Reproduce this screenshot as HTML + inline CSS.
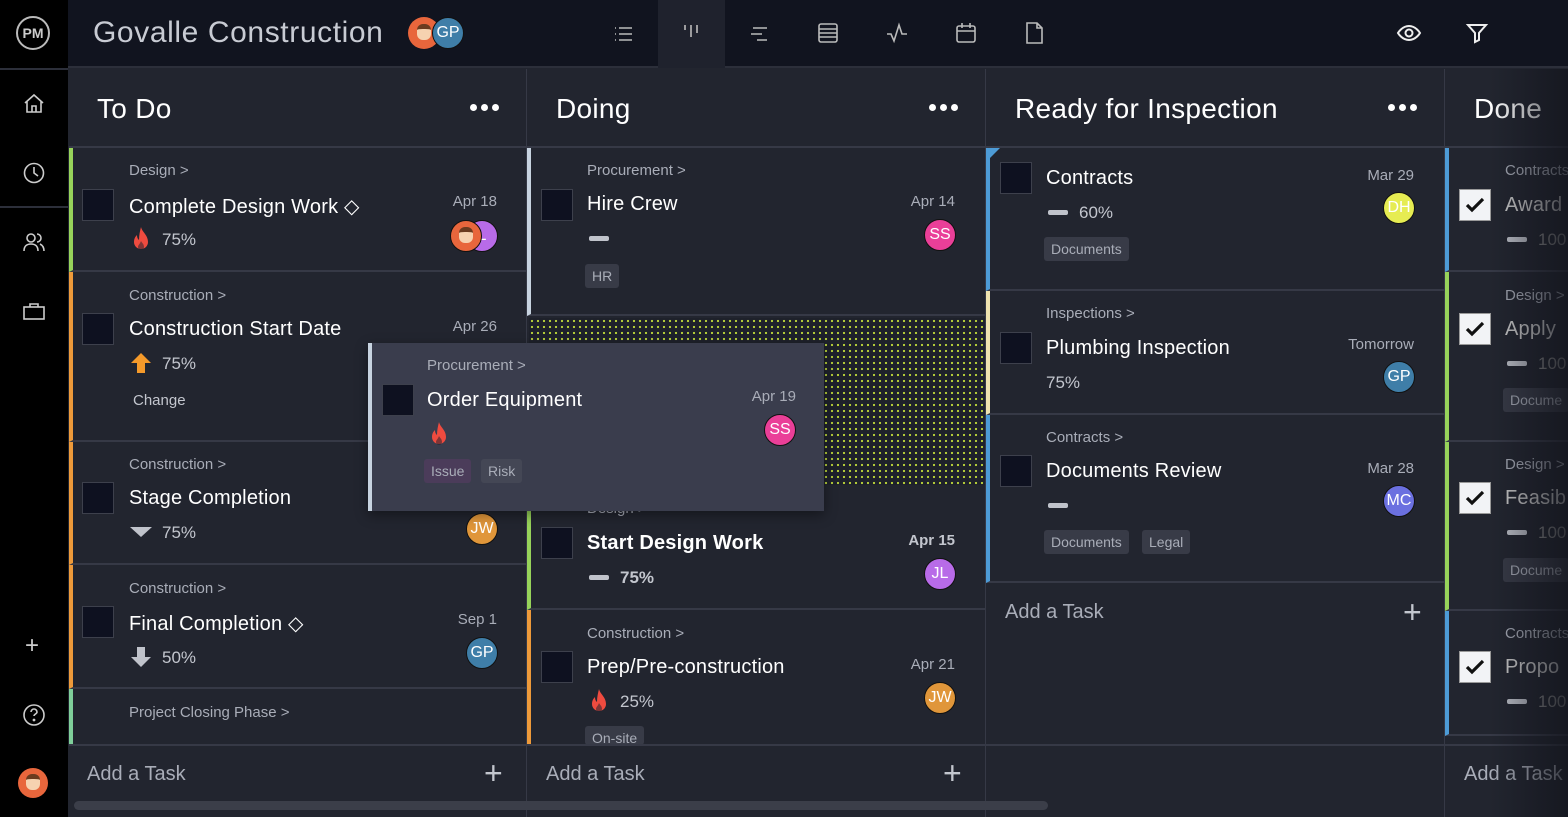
<!DOCTYPE html>
<html><head><meta charset="utf-8"><style>
*{margin:0;padding:0;box-sizing:border-box}
body{width:1568px;height:817px;overflow:hidden;background:#22252f;font-family:"Liberation Sans",sans-serif;position:relative;color:#fff}
.a{position:absolute}
.side{left:0;top:0;width:68px;height:817px;background:#000}
.top{left:68px;top:0;width:1500px;height:68px;background:#11141f;border-bottom:2px solid #2c2f3a}
.col{top:69px;height:748px;background:#22252f;border-right:1px solid #363946}
.hdr{font-size:28px;color:#fff;top:93px;letter-spacing:.3px}
.dots{display:flex;gap:4px}
.dots i{width:7px;height:7px;border-radius:50%;background:#fff;display:block}
.card{background:#22252f;border-bottom:2px solid #363946;border-left:4px solid #888}
.cat{font-size:15px;color:#a9adb8}
.tt{font-size:20px;color:#fff;letter-spacing:.2px}
.dt{font-size:15px;color:#a9adb8;text-align:right}
.pc{font-size:17px;color:#c3c6ce}
.cb{width:32px;height:32px;background:#0e1120;border:1.5px solid #3d404c}
.av{width:32px;height:32px;border-radius:50%;font-size:16px;text-align:center;line-height:30px;color:#fff;border:1.5px solid #111}
.tag{font-size:14px;color:#a9adb8;background:#383b47;border-radius:3px;padding:4px 7px}
.dash{width:20px;height:5px;background:#c0c3cb;border-radius:2px}
.add{font-size:20px;color:#a9adb8}
.plus{font-size:32px;color:#c3c6ce;font-weight:300}
.ck{width:32px;height:32px;background:#f2f3f6;border:1.5px solid #999}
</style></head><body>
<svg width="0" height="0" style="position:absolute"><defs><symbol id="fl" viewBox="0 0 20 24"><path d="M10 0c1 5 7 8 7 15a7 7 0 01-14 0c0-3 1-5 3-7 0 3 1 4 2 5 0-5 1-9 2-13z" fill="#ef4b3f"/><path d="M10 14c1 2 3 3 3 6a3 3 0 01-6 0c0-2 2-3 3-6z" fill="#22252f" opacity=".55"/></symbol>
<symbol id="ck" viewBox="0 0 24 24"><path d="M4 12l5 5 11-11" fill="none" stroke="#111" stroke-width="3.2"/></symbol></defs></svg>
<div class="a side"></div>
<div class="a" style="left:0;top:68px;width:68px;height:2px;background:#2c2f3a"></div>
<div class="a" style="left:0;top:206px;width:68px;height:2px;background:#2c2f3a"></div>
<div class="a" style="left:16px;top:16px;width:34px;height:34px;border:2px solid #bbb;border-radius:50%;font-size:14px;font-weight:bold;color:#ccc;text-align:center;line-height:30px">PM</div>
<svg class="a" style="left:22px;top:92px" width="24" height="24" viewBox="0 0 24 24" fill="none" stroke="#ccc" stroke-width="1.6"><path d="M3 11L12 3l9 8M5 9v11h14V9M10 20v-6h4v6"/></svg>
<svg class="a" style="left:22px;top:161px" width="24" height="24" viewBox="0 0 24 24" fill="none" stroke="#ccc" stroke-width="1.6"><circle cx="12" cy="12" r="9.5"/><path d="M12 6v6l4 3"/></svg>
<svg class="a" style="left:22px;top:230px" width="24" height="24" viewBox="0 0 24 24" fill="none" stroke="#ccc" stroke-width="1.6"><circle cx="9" cy="8" r="4"/><path d="M2 21c0-5 3-7 7-7s7 2 7 7M15 4a4 4 0 010 8M18 14c2 1 4 3 4 7"/></svg>
<svg class="a" style="left:22px;top:300px" width="24" height="24" viewBox="0 0 24 24" fill="none" stroke="#ccc" stroke-width="1.6"><rect x="2" y="7" width="20" height="12"/><path d="M8 7V4h8v3"/></svg>
<div class="a" style="left:25px;top:632px;font-size:24px;color:#ccc">+</div>
<svg class="a" style="left:22px;top:703px" width="24" height="24" viewBox="0 0 24 24" fill="none" stroke="#ccc" stroke-width="1.6"><circle cx="12" cy="12" r="10"/><path d="M9 9a3 3 0 116 0c0 2-3 2-3 4"/><circle cx="12" cy="17" r=".6" fill="#ccc"/></svg>
<div class="a" style="left:18px;top:768px;width:30px;height:30px;border-radius:50%;background:#e8663c"><div class="a" style="left:8px;top:6px;width:14px;height:16px;border-radius:6px;background:#f6d2b0;border-top:5px solid #6b3b1f"></div></div>

<div class="a top"></div>
<div class="a" style="left:93px;top:16px;font-size:30px;color:#c8cbd3;letter-spacing:.6px">Govalle Construction</div>
<div class="a" style="left:408px;top:17px;width:32px;height:32px;border-radius:50%;background:#e8663c"><div class="a" style="left:9px;top:7px;width:14px;height:16px;border-radius:6px;background:#f6d2b0;border-top:5px solid #6b3b1f"></div></div>
<div class="a av" style="left:432px;top:17px;background:#3f7ea8">GP</div>
<div class="a" style="left:658px;top:0;width:67px;height:68px;background:#1f222d"></div>
<svg class="a" style="left:611px;top:22px" width="24" height="24" viewBox="0 0 24 24" stroke="#bbb" stroke-width="1.6"><path d="M4 6h1M4 12h1M4 18h1M8 6h13M8 12h13M8 18h13"/></svg>
<svg class="a" style="left:679px;top:20px" width="24" height="24" viewBox="0 0 24 24" stroke="#bbb" stroke-width="1.6"><path d="M6 5v5M12 5v12M18 5v8"/></svg>
<svg class="a" style="left:747px;top:22px" width="24" height="24" viewBox="0 0 24 24" stroke="#bbb" stroke-width="1.6"><path d="M6 6h14M4 12h11M10 18h10"/></svg>
<svg class="a" style="left:816px;top:21px" width="24" height="24" viewBox="0 0 24 24" fill="none" stroke="#bbb" stroke-width="1.6"><rect x="3" y="3" width="18" height="18" rx="2"/><path d="M3 8h18M3 12h18M3 16h18"/></svg>
<svg class="a" style="left:885px;top:21px" width="24" height="24" viewBox="0 0 24 24" fill="none" stroke="#bbb" stroke-width="1.6"><path d="M2 13h4l3 7 5-16 3 9h5"/></svg>
<svg class="a" style="left:954px;top:21px" width="24" height="24" viewBox="0 0 24 24" fill="none" stroke="#bbb" stroke-width="1.6"><rect x="3" y="5" width="18" height="16" rx="2"/><path d="M3 10h18M8 2v5M16 2v5"/></svg>
<svg class="a" style="left:1022px;top:21px" width="24" height="24" viewBox="0 0 24 24" fill="none" stroke="#bbb" stroke-width="1.6"><path d="M5 2h10l5 5v15H5zM15 2v5h5"/></svg>
<svg class="a" style="left:1396px;top:21px" width="26" height="24" viewBox="0 0 26 24" fill="none" stroke="#eee" stroke-width="2"><path d="M2 12s4-7 11-7 11 7 11 7-4 7-11 7S2 12 2 12z"/><circle cx="13" cy="12" r="3.5"/></svg>
<svg class="a" style="left:1465px;top:21px" width="24" height="24" viewBox="0 0 24 24" fill="none" stroke="#eee" stroke-width="2"><path d="M3 4h18l-7 8v7l-4 2v-9z"/></svg>

<div class="a col" style="left:69px;width:458px"></div>
<div class="a col" style="left:527px;width:459px"></div>
<div class="a col" style="left:986px;width:459px"></div>
<div class="a col" style="left:1445px;width:123px;border:0"></div>
<div class="a" style="left:69px;top:146px;width:1499px;height:2px;background:#363946"></div>
<div class="a hdr" style="left:97px">To Do</div><div class="a dots" style="left:470px;top:104px"><i></i><i></i><i></i></div>
<div class="a hdr" style="left:556px">Doing</div><div class="a dots" style="left:929px;top:104px"><i></i><i></i><i></i></div>
<div class="a hdr" style="left:1015px">Ready for Inspection</div><div class="a dots" style="left:1388px;top:104px"><i></i><i></i><i></i></div>
<div class="a hdr" style="left:1474px">Done</div>

<!-- To Do -->
<div class="a card" style="left:69px;top:148px;width:457px;height:124px;border-left-color:#97d35a"></div>
<div class="a cat" style="left:129px;top:162px">Design &gt;</div>
<div class="a cb" style="left:82px;top:189px"></div>
<div class="a tt" style="left:129px;top:194px">Complete Design Work ◇</div>
<div class="a dt" style="left:440px;top:193px;width:57px">Apr 18</div>
<svg class="a" style="left:131px;top:227px" width="20" height="24"><use href="#fl"/></svg>
<div class="a pc" style="left:162px;top:230px">75%</div>
<div class="a av" style="left:466px;top:220px;background:#b86be8">L</div>
<div class="a" style="left:450px;top:220px;width:32px;height:32px;border-radius:50%;background:#e8663c;border:1.5px solid #111"><div class="a" style="left:8px;top:6px;width:14px;height:16px;border-radius:6px;background:#f6d2b0;border-top:5px solid #6b3b1f"></div></div>

<div class="a card" style="left:69px;top:272px;width:457px;height:170px;border-left-color:#ee9a3a"></div>
<div class="a cat" style="left:129px;top:287px">Construction &gt;</div>
<div class="a cb" style="left:82px;top:313px"></div>
<div class="a tt" style="left:129px;top:318px">Construction Start Date</div>
<div class="a dt" style="left:440px;top:318px;width:57px">Apr 26</div>
<svg class="a" style="left:130px;top:352px" width="22" height="22" viewBox="0 0 22 22"><path d="M11 1L21 11h-6v10H7V11H1z" fill="#f59a2a"/></svg>
<div class="a pc" style="left:162px;top:354px">75%</div>
<div class="a cat" style="left:133px;top:392px;color:#c3c6ce">Change</div>

<div class="a card" style="left:69px;top:442px;width:457px;height:123px;border-left-color:#ee9a3a"></div>
<div class="a cat" style="left:129px;top:456px">Construction &gt;</div>
<div class="a cb" style="left:82px;top:482px"></div>
<div class="a tt" style="left:129px;top:487px">Stage Completion</div>
<div class="a" style="left:130px;top:527px;border-left:11px solid transparent;border-right:11px solid transparent;border-top:10px solid #c0c3cb"></div>
<div class="a pc" style="left:162px;top:523px">75%</div>
<div class="a av" style="left:466px;top:513px;background:#e0963a">JW</div>

<div class="a card" style="left:69px;top:565px;width:457px;height:124px;border-left-color:#ee9a3a"></div>
<div class="a cat" style="left:129px;top:580px">Construction &gt;</div>
<div class="a cb" style="left:82px;top:606px"></div>
<div class="a tt" style="left:129px;top:611px">Final Completion ◇</div>
<div class="a dt" style="left:440px;top:611px;width:57px">Sep 1</div>
<svg class="a" style="left:130px;top:646px" width="22" height="22" viewBox="0 0 22 22"><path d="M11 21L21 11h-6V1H7v10H1z" fill="#c0c3cb"/></svg>
<div class="a pc" style="left:162px;top:648px">50%</div>
<div class="a av" style="left:466px;top:637px;background:#3f7ea8">GP</div>

<div class="a card" style="left:69px;top:689px;width:457px;height:56px;border-left-color:#7fcf9a;border-bottom:0"></div>
<div class="a cat" style="left:129px;top:704px">Project Closing Phase &gt;</div>

<!-- Doing -->
<div class="a card" style="left:527px;top:148px;width:458px;height:168px;border-left-color:#c7d3e0"></div>
<div class="a cat" style="left:587px;top:162px">Procurement &gt;</div>
<div class="a cb" style="left:541px;top:189px"></div>
<div class="a tt" style="left:587px;top:193px">Hire Crew</div>
<div class="a dt" style="left:898px;top:193px;width:57px">Apr 14</div>
<div class="a dash" style="left:589px;top:236px"></div>
<div class="a av" style="left:924px;top:219px;background:#ea3f98">SS</div>
<div class="a tag" style="left:585px;top:264px">HR</div>
<div class="a" style="left:529px;top:318px;width:456px;height:167px;background-color:#1e212b;background-image:radial-gradient(#b9d23a 1px,transparent 1.3px);background-size:6px 6px"></div>

<div class="a card" style="left:527px;top:486px;width:458px;height:124px;border-left-color:#97d35a"></div>
<div class="a cat" style="left:587px;top:500px">Design &gt;</div>
<div class="a cb" style="left:541px;top:527px"></div>
<div class="a tt" style="left:587px;top:532px;font-weight:bold">Start Design Work</div>
<div class="a dt" style="left:898px;top:532px;width:57px;font-weight:bold;color:#c3c6ce">Apr 15</div>
<div class="a dash" style="left:589px;top:575px"></div>
<div class="a pc" style="left:620px;top:568px;font-weight:bold">75%</div>
<div class="a av" style="left:924px;top:558px;background:#b86be8">JL</div>

<div class="a card" style="left:527px;top:610px;width:458px;height:135px;border-left-color:#ee9a3a;border-bottom:0"></div>
<div class="a cat" style="left:587px;top:625px">Construction &gt;</div>
<div class="a cb" style="left:541px;top:651px"></div>
<div class="a tt" style="left:587px;top:656px">Prep/Pre-construction</div>
<div class="a dt" style="left:898px;top:656px;width:57px">Apr 21</div>
<svg class="a" style="left:589px;top:689px" width="20" height="24"><use href="#fl"/></svg>
<div class="a pc" style="left:620px;top:692px">25%</div>
<div class="a av" style="left:924px;top:682px;background:#e0963a">JW</div>
<div class="a tag" style="left:585px;top:726px;height:19px;overflow:hidden">On-site</div>

<!-- Ready -->
<div class="a card" style="left:986px;top:148px;width:458px;height:143px;border-left-color:#4d9bd6"></div>
<div class="a" style="left:988px;top:148px;border-top:12px solid #4d9bd6;border-right:12px solid transparent"></div>
<div class="a cb" style="left:1000px;top:162px"></div>
<div class="a tt" style="left:1046px;top:167px">Contracts</div>
<div class="a dt" style="left:1357px;top:167px;width:57px">Mar 29</div>
<div class="a dash" style="left:1048px;top:210px"></div>
<div class="a pc" style="left:1079px;top:203px">60%</div>
<div class="a av" style="left:1383px;top:192px;background:#e6ec52">DH</div>
<div class="a tag" style="left:1044px;top:237px">Documents</div>

<div class="a card" style="left:986px;top:291px;width:458px;height:124px;border-left-color:#efe3b0"></div>
<div class="a cat" style="left:1046px;top:305px">Inspections &gt;</div>
<div class="a cb" style="left:1000px;top:332px"></div>
<div class="a tt" style="left:1046px;top:337px">Plumbing Inspection</div>
<div class="a dt" style="left:1314px;top:336px;width:100px">Tomorrow</div>
<div class="a pc" style="left:1046px;top:373px">75%</div>
<div class="a av" style="left:1383px;top:361px;background:#3f7ea8">GP</div>

<div class="a card" style="left:986px;top:415px;width:458px;height:168px;border-left-color:#4d9bd6"></div>
<div class="a cat" style="left:1046px;top:429px">Contracts &gt;</div>
<div class="a cb" style="left:1000px;top:455px"></div>
<div class="a tt" style="left:1046px;top:460px">Documents Review</div>
<div class="a dt" style="left:1357px;top:460px;width:57px">Mar 28</div>
<div class="a dash" style="left:1048px;top:503px"></div>
<div class="a av" style="left:1383px;top:485px;background:#6b70e0">MC</div>
<div class="a tag" style="left:1044px;top:530px">Documents</div>
<div class="a tag" style="left:1142px;top:530px">Legal</div>
<div class="a add" style="left:1005px;top:601px">Add a Task</div>
<div class="a plus" style="left:1403px;top:594px">+</div>

<!-- Done -->
<div class="a card" style="left:1445px;top:148px;width:123px;height:124px;border-left-color:#4d9bd6"></div>
<div class="a cat" style="left:1505px;top:162px">Contracts</div>
<div class="a ck" style="left:1459px;top:189px"></div><svg class="a" style="left:1463px;top:193px" width="24" height="24"><use href="#ck"/></svg>
<div class="a tt" style="left:1505px;top:194px;color:#ccc">Award</div>
<div class="a dash" style="left:1507px;top:237px"></div><div class="a pc" style="left:1538px;top:230px;color:#888">100</div>

<div class="a card" style="left:1445px;top:272px;width:123px;height:170px;border-left-color:#97d35a"></div>
<div class="a cat" style="left:1505px;top:287px">Design &gt;</div>
<div class="a ck" style="left:1459px;top:313px"></div><svg class="a" style="left:1463px;top:317px" width="24" height="24"><use href="#ck"/></svg>
<div class="a tt" style="left:1505px;top:318px;color:#ccc">Apply</div>
<div class="a dash" style="left:1507px;top:361px"></div><div class="a pc" style="left:1538px;top:354px;color:#888">100</div>
<div class="a tag" style="left:1503px;top:388px">Docume</div>

<div class="a card" style="left:1445px;top:442px;width:123px;height:169px;border-left-color:#97d35a"></div>
<div class="a cat" style="left:1505px;top:456px">Design &gt;</div>
<div class="a ck" style="left:1459px;top:482px"></div><svg class="a" style="left:1463px;top:486px" width="24" height="24"><use href="#ck"/></svg>
<div class="a tt" style="left:1505px;top:487px;color:#ccc">Feasib</div>
<div class="a dash" style="left:1507px;top:530px"></div><div class="a pc" style="left:1538px;top:523px;color:#888">100</div>
<div class="a tag" style="left:1503px;top:558px">Docume</div>

<div class="a card" style="left:1445px;top:611px;width:123px;height:125px;border-left-color:#4d9bd6"></div>
<div class="a cat" style="left:1505px;top:625px">Contracts</div>
<div class="a ck" style="left:1459px;top:651px"></div><svg class="a" style="left:1463px;top:655px" width="24" height="24"><use href="#ck"/></svg>
<div class="a tt" style="left:1505px;top:656px;color:#ccc">Propo</div>
<div class="a dash" style="left:1507px;top:699px"></div><div class="a pc" style="left:1538px;top:692px;color:#888">100</div>

<div class="a" style="left:69px;top:744px;width:1499px;height:2px;background:#363946"></div>
<div class="a" style="left:69px;top:746px;width:1499px;height:71px;background:#22252f"></div>
<div class="a" style="left:526px;top:746px;width:1px;height:71px;background:#363946"></div>
<div class="a" style="left:985px;top:746px;width:1px;height:71px;background:#363946"></div>
<div class="a" style="left:1444px;top:746px;width:1px;height:71px;background:#363946"></div>
<div class="a add" style="left:87px;top:763px">Add a Task</div><div class="a plus" style="left:484px;top:755px">+</div>
<div class="a add" style="left:546px;top:763px">Add a Task</div><div class="a plus" style="left:943px;top:755px">+</div>
<div class="a add" style="left:1464px;top:763px">Add a Task</div>
<div class="a" style="left:74px;top:801px;width:974px;height:9px;border-radius:5px;background:#3b3e49"></div>

<div class="a" style="left:1490px;top:69px;width:78px;height:748px;background:linear-gradient(to right,rgba(18,20,28,0),rgba(18,20,28,.75))"></div>

<div class="a" style="left:368px;top:343px;width:456px;height:168px;background:#3a3d4d;border-left:4px solid #c7d3e0;box-shadow:0 4px 12px rgba(0,0,0,.4)"></div>
<div class="a cat" style="left:427px;top:357px">Procurement &gt;</div>
<div class="a cb" style="left:382px;top:384px"></div>
<div class="a tt" style="left:427px;top:389px">Order Equipment</div>
<div class="a dt" style="left:739px;top:388px;width:57px">Apr 19</div>
<svg class="a" style="left:429px;top:422px" width="20" height="24"><use href="#fl"/></svg>
<div class="a av" style="left:764px;top:414px;background:#ea3f98">SS</div>
<div class="a tag" style="left:424px;top:459px;background:#4b3c5a">Issue</div>
<div class="a tag" style="left:481px;top:459px;background:#444755">Risk</div>
</body></html>
